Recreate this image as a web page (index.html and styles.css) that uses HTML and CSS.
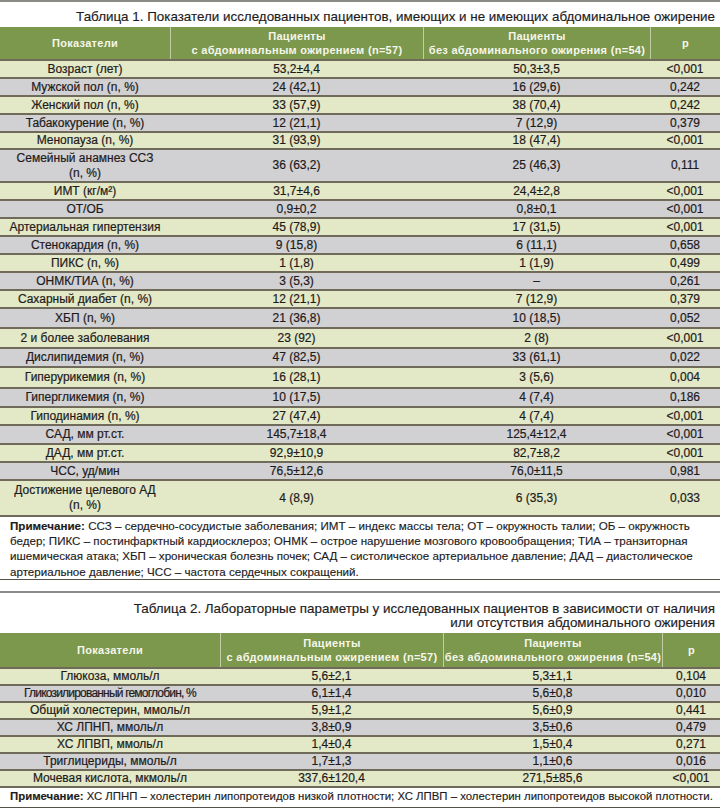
FILE: index.html
```html
<!DOCTYPE html>
<html lang="ru">
<head>
<meta charset="utf-8">
<link rel="stylesheet" href="styles.css">
</head>
<body>
<div class="page">
  <div class="rule-top"></div>
  <div class="caption c1">Таблица 1. Показатели исследованных пациентов, имеющих и не имеющих абдоминальное ожирение</div>
  <div class="tbl t1">
    <div class="row head">
      <div class="cell">Показатели</div>
      <div class="cell">Пациенты<br>с абдоминальным ожирением (n=57)</div>
      <div class="cell">Пациенты<br>без абдоминального ожирения (n=54)</div>
      <div class="cell">p</div>
    </div>
    <div class="body">
      <div class="row h18"><div class="cell">Возраст (лет)</div><div class="cell">53,2±4,4</div><div class="cell">50,3±3,5</div><div class="cell">&lt;0,001</div></div>
      <div class="row h18"><div class="cell">Мужской пол (n, %)</div><div class="cell">24 (42,1)</div><div class="cell">16 (29,6)</div><div class="cell">0,242</div></div>
      <div class="row h18"><div class="cell">Женский пол (n, %)</div><div class="cell">33 (57,9)</div><div class="cell">38 (70,4)</div><div class="cell">0,242</div></div>
      <div class="row h18"><div class="cell">Табакокурение (n, %)</div><div class="cell">12 (21,1)</div><div class="cell">7 (12,9)</div><div class="cell">0,379</div></div>
      <div class="row h17"><div class="cell">Менопауза (n, %)</div><div class="cell">31 (93,9)</div><div class="cell">18 (47,4)</div><div class="cell">&lt;0,001</div></div>
      <div class="row h33"><div class="cell">Семейный анамнез ССЗ<br>(n, %)</div><div class="cell">36 (63,2)</div><div class="cell">25 (46,3)</div><div class="cell">0,111</div></div>
      <div class="row h18"><div class="cell">ИМТ (кг/м²)</div><div class="cell">31,7±4,6</div><div class="cell">24,4±2,8</div><div class="cell">&lt;0,001</div></div>
      <div class="row h18"><div class="cell">ОТ/ОБ</div><div class="cell">0,9±0,2</div><div class="cell">0,8±0,1</div><div class="cell">&lt;0,001</div></div>
      <div class="row h18"><div class="cell">Артериальная гипертензия</div><div class="cell">45 (78,9)</div><div class="cell">17 (31,5)</div><div class="cell">&lt;0,001</div></div>
      <div class="row h18"><div class="cell">Стенокардия (n, %)</div><div class="cell">9 (15,8)</div><div class="cell">6 (11,1)</div><div class="cell">0,658</div></div>
      <div class="row h18"><div class="cell">ПИКС (n, %)</div><div class="cell">1 (1,8)</div><div class="cell">1 (1,9)</div><div class="cell">0,499</div></div>
      <div class="row h18"><div class="cell">ОНМК/ТИА (n, %)</div><div class="cell">3 (5,3)</div><div class="cell">–</div><div class="cell">0,261</div></div>
      <div class="row h18"><div class="cell">Сахарный диабет (n, %)</div><div class="cell">12 (21,1)</div><div class="cell">7 (12,9)</div><div class="cell">0,379</div></div>
      <div class="row h20"><div class="cell">ХБП (n, %)</div><div class="cell">21 (36,8)</div><div class="cell">10 (18,5)</div><div class="cell">0,052</div></div>
      <div class="row h20"><div class="cell">2 и более заболевания</div><div class="cell">23 (92)</div><div class="cell">2 (8)</div><div class="cell">&lt;0,001</div></div>
      <div class="row h19"><div class="cell">Дислипидемия (n, %)</div><div class="cell">47 (82,5)</div><div class="cell">33 (61,1)</div><div class="cell">0,022</div></div>
      <div class="row h21"><div class="cell">Гиперурикемия (n, %)</div><div class="cell">16 (28,1)</div><div class="cell">3 (5,6)</div><div class="cell">0,004</div></div>
      <div class="row h19"><div class="cell">Гипергликемия (n, %)</div><div class="cell">10 (17,5)</div><div class="cell">4 (7,4)</div><div class="cell">0,186</div></div>
      <div class="row h18"><div class="cell">Гиподинамия (n, %)</div><div class="cell">27 (47,4)</div><div class="cell">4 (7,4)</div><div class="cell">&lt;0,001</div></div>
      <div class="row h19"><div class="cell">САД, мм рт.ст.</div><div class="cell">145,7±18,4</div><div class="cell">125,4±12,4</div><div class="cell">&lt;0,001</div></div>
      <div class="row h18"><div class="cell">ДАД, мм рт.ст.</div><div class="cell">92,9±10,9</div><div class="cell">82,7±8,2</div><div class="cell">&lt;0,001</div></div>
      <div class="row h18"><div class="cell">ЧСС, уд/мин</div><div class="cell">76,5±12,6</div><div class="cell">76,0±11,5</div><div class="cell">0,981</div></div>
      <div class="row h36"><div class="cell">Достижение целевого АД<br>(n, %)</div><div class="cell">4 (8,9)</div><div class="cell">6 (35,3)</div><div class="cell">0,033</div></div>
    </div>
  </div>
  <div class="note n1"><b>Примечание:</b> ССЗ – сердечно-сосудистые заболевания; ИМТ – индекс массы тела; ОТ – окружность талии; ОБ – окружность<br>бедер; ПИКС – постинфарктный кардиосклероз; ОНМК – острое нарушение мозгового кровообращения; ТИА – транзиторная<br>ишемическая атака; ХБП – хроническая болезнь почек; САД – систолическое артериальное давление; ДАД – диастолическое<br>артериальное давление; ЧСС – частота сердечных сокращений.</div>

  <div class="rule-mid"></div>
  <div class="caption c2">Таблица 2. Лабораторные параметры у исследованных пациентов в зависимости от наличия<br>или отсутствия абдоминального ожирения</div>
  <div class="tbl t2">
    <div class="row head">
      <div class="cell">Показатели</div>
      <div class="cell">Пациенты<br>с абдоминальным ожирением (n=57)</div>
      <div class="cell">Пациенты<br>без абдоминального ожирения (n=54)</div>
      <div class="cell">p</div>
    </div>
    <div class="body">
      <div class="row h17"><div class="cell">Глюкоза, ммоль/л</div><div class="cell">5,6±2,1</div><div class="cell">5,3±1,1</div><div class="cell">0,104</div></div>
      <div class="row h17"><div class="cell tight">Гликозилированный гемоглобин, %</div><div class="cell">6,1±1,4</div><div class="cell">5,6±0,8</div><div class="cell">0,010</div></div>
      <div class="row h17"><div class="cell">Общий холестерин, ммоль/л</div><div class="cell">5,9±1,2</div><div class="cell">5,6±0,9</div><div class="cell">0,441</div></div>
      <div class="row h17"><div class="cell">ХС ЛПНП, ммоль/л</div><div class="cell">3,8±0,9</div><div class="cell">3,5±0,6</div><div class="cell">0,479</div></div>
      <div class="row h17"><div class="cell">ХС ЛПВП, ммоль/л</div><div class="cell">1,4±0,4</div><div class="cell">1,5±0,4</div><div class="cell">0,271</div></div>
      <div class="row h17"><div class="cell">Триглицериды, ммоль/л</div><div class="cell">1,7±1,3</div><div class="cell">1,1±0,6</div><div class="cell">0,016</div></div>
      <div class="row h17"><div class="cell">Мочевая кислота, мкмоль/л</div><div class="cell">337,6±120,4</div><div class="cell">271,5±85,6</div><div class="cell">&lt;0,001</div></div>
    </div>
  </div>
  <div class="note n2"><b>Примечание:</b> ХС ЛПНП – холестерин липопротеидов низкой плотности; ХС ЛПВП – холестерин липопротеидов высокой плотности.</div>
</div>
</body>
</html>
```

FILE: styles.css
```css
* { box-sizing: border-box; }
html, body { margin: 0; padding: 0; background: #ffffff; }
body {
  font-family: "Liberation Sans", Arial, sans-serif;
  color: #1e1b1c;
  font-size: 12px;
}
.page { width: 720px; }

.rule-top { height: 2px; background: #8a8a86; }
.rule-mid { height: 2px; background: #8a8a86; margin-top: 11px; }

.caption {
  font-size: 13.4px;
  text-align: right;
  padding-right: 5px;
  color: #1e1b1c;
  -webkit-text-stroke: 0.15px #1e1b1c;
}
.c1 { height: 25px; line-height: 16px; padding-top: 7px; }
.c2 { height: 40px; line-height: 14px; padding-top: 9px; }

.tbl { width: 720px; }
.row {
  display: grid;
  align-items: center;
  text-align: center;
}
.t1 .row { grid-template-columns: 170px 253px 227px 70px; }
.t2 .row { grid-template-columns: 220px 223px 219px 58px; }

.cell { line-height: 15px; white-space: nowrap; }
.body .cell { -webkit-text-stroke: 0.2px #1e1b1c; }

.head { background: #7b984d; color: #f6f6ea; font-weight: bold; font-size: 11px; letter-spacing: 0.3px; height: 32px; align-items: stretch; }
.t2 .head { height: 34px; }
.head .cell { display: flex; align-items: center; justify-content: center; line-height: 14.5px; border-left: 1px solid #c2cda6; }
.head .cell:first-child { border-left: none; }

.body .row { border-top: 2px solid #6f6a5a; }
.body .row:last-child { border-bottom: 2px solid #6f6a5a; }
.body .row:nth-child(odd) { background: #e3e8c6; }
.body .row:nth-child(even) { background: #d1d0d3; }

.h17 { height: 17px; }
.h18 { height: 18px; }
.h19 { height: 19px; }
.h20 { height: 20px; }
.h21 { height: 21px; }
.h33 { height: 33px; }
.h36 { height: 36px; }
.body .row:last-child.h36 { height: 38px; }
.t2 .body .row:last-child { height: 19px; }

.tight { letter-spacing: -0.8px; }

.note {
  font-size: 11.6px;
  padding-left: 10px;
  white-space: nowrap;
  border-bottom: 1.5px solid #55524a;
  -webkit-text-stroke: 0.15px #1e1b1c;
}
.n1 { line-height: 15.2px; padding-top: 1px; height: 63px; }
.n2 { line-height: 16px; height: 20px; padding-top: 0; font-size: 11.4px; }
```
